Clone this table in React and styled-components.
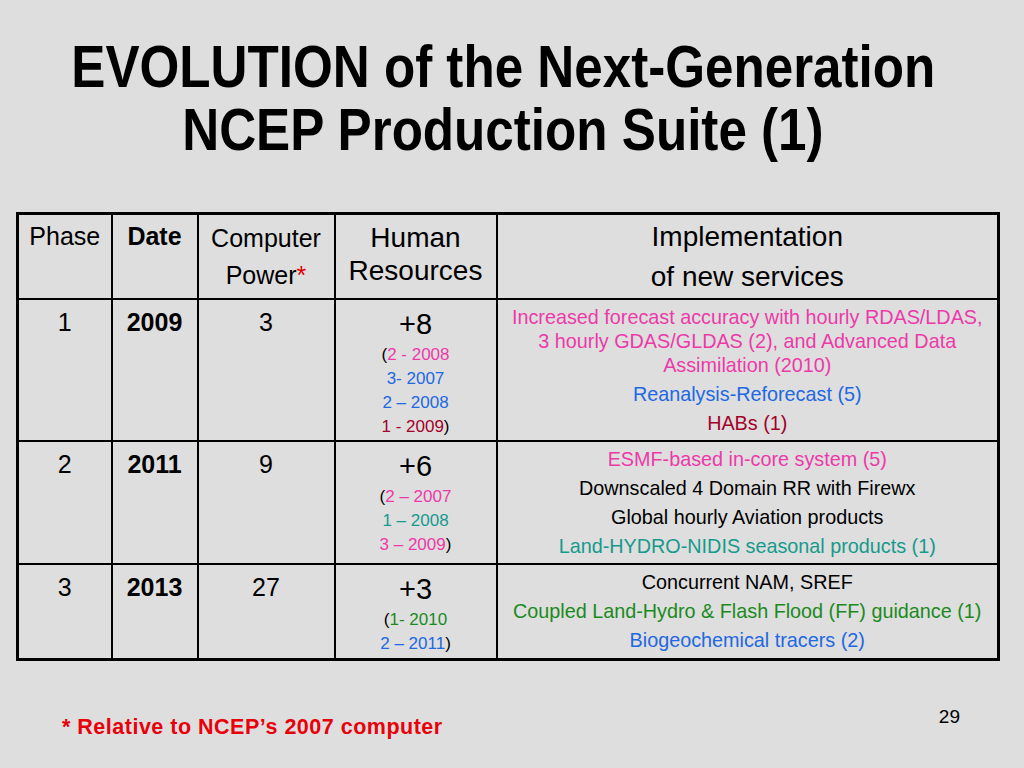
import styled, { createGlobalStyle } from "styled-components";

const GlobalStyle = createGlobalStyle`
    html, body {
        margin: 0;
        padding: 0;
        background: #dedede;
    }
`

const C = {
    pink: "#ec3aa9",
    blue: "#2168e2",
    red: "#a3002a",
    teal: "#169a8c",
    green: "#1b8a1d",
    black: "#000",
}

const rows = [
    {
        phase: "1",
        date: "2009",
        power: "3",
        hr: "+8",
        hrList: [
            { text: "2 - 2008", color: C.pink },
            { text: "3- 2007", color: C.blue },
            { text: "2 \u2013 2008", color: C.blue },
            { text: "1 - 2009", color: C.red },
        ],
        height: 142,
        services: [
            { text: "Increased forecast accuracy with hourly RDAS/LDAS, 3 hourly GDAS/GLDAS (2), and Advanced Data Assimilation (2010)", color: C.pink },
            { text: "Reanalysis-Reforecast (5)", color: C.blue },
            { text: "HABs (1)", color: C.red },
        ],
    },
    {
        phase: "2",
        date: "2011",
        power: "9",
        hr: "+6",
        hrList: [
            { text: "2 \u2013 2007", color: C.pink },
            { text: "1 \u2013 2008", color: C.teal },
            { text: "3 \u2013 2009", color: C.pink },
        ],
        height: 120,
        services: [
            { text: "ESMF-based in-core system (5)", color: C.pink },
            { text: "Downscaled 4 Domain RR with Firewx", color: C.black },
            { text: "Global hourly Aviation products", color: C.black },
            { text: "Land-HYDRO-NIDIS seasonal products (1)", color: C.teal },
        ],
    },
    {
        phase: "3",
        date: "2013",
        power: "27",
        hr: "+3",
        hrList: [
            { text: "1- 2010", color: C.green },
            { text: "2 \u2013 2011", color: C.blue },
        ],
        height: 96,
        services: [
            { text: "Concurrent NAM, SREF", color: C.black },
            { text: "Coupled Land-Hydro & Flash Flood (FF) guidance (1)", color: C.green },
            { text: "Biogeochemical tracers (2)", color: C.blue },
        ],
    },
]

export default function App() {
    return (
        <$Slide>
            <GlobalStyle />
            <$Title>
                <$TitleLine>EVOLUTION of the Next-Generation</$TitleLine>
                <$TitleLine>NCEP Production Suite (1)</$TitleLine>
            </$Title>

            <$Table>
                <colgroup>
                    <$Col w={94} />
                    <$Col w={86} />
                    <$Col w={137} />
                    <$Col w={162} />
                    <$Col />
                </colgroup>
                <thead>
                    <tr>
                        <$Head pad={7}>Phase</$Head>
                        <$Head pad={7} bold>Date</$Head>
                        <$Head pad={5} lh={37}>Computer<br />Power<$Star>*</$Star></$Head>
                        <$Head pad={6} big lh={33}>Human<br />Resources</$Head>
                        <$Head pad={2} big lh={40}>Implementation<br />of new services</$Head>
                    </tr>
                </thead>
                <tbody>
                    {rows.map(r => (
                        <$Row key={r.phase} h={r.height}>
                            <$Cell>{r.phase}</$Cell>
                            <$Cell bold>{r.date}</$Cell>
                            <$Cell>{r.power}</$Cell>
                            <$Cell>
                                <$Plus>{r.hr}</$Plus>
                                <$HrList>
                                    {r.hrList.map((h, i) => (
                                        <div key={i}>
                                            {i === 0 ? "(" : ""}
                                            <$Tint color={h.color}>{h.text}</$Tint>
                                            {i === r.hrList.length - 1 ? ")" : ""}
                                        </div>
                                    ))}
                                </$HrList>
                            </$Cell>
                            <$Services>
                                {r.services.map((s, i) => (
                                    <$Service key={i} color={s.color}>{s.text}</$Service>
                                ))}
                            </$Services>
                        </$Row>
                    ))}
                </tbody>
            </$Table>

            <$Footer>
                <$Note>* Relative to NCEP’s 2007 computer</$Note>
                <$PageNum>29</$PageNum>
            </$Footer>
        </$Slide>
    )
}

const $Slide = styled.div`
    width: 1024px;
    height: 768px;
    box-sizing: border-box;
    padding: 36px 16px 0 16px;
    background: #dedede;
    font-family: "Liberation Sans", Arial, sans-serif;
    color: #000;
    display: flex;
    flex-direction: column;
    overflow: hidden;
`

const $Title = styled.h1`
    margin: 0;
    padding-right: 18px;
    display: flex;
    flex-direction: column;
    align-items: center;
    font-family: "Liberation Sans", Arial, sans-serif;
    font-weight: 700;
    font-size: 59px;
    line-height: 63px;
    color: #000;
`

const $TitleLine = styled.span`
    display: block;
    white-space: nowrap;
    transform: scaleX(0.867);
    transform-origin: center;
`

const $Table = styled.table`
    margin-top: 50px;
    width: 984px;
    table-layout: fixed;
    border-collapse: collapse;
    border: 3px solid #000;
`

const $Col = styled.col`
    width: ${p => p.w ? p.w + "px" : "auto"};
`

const $Row = styled.tr`
    height: ${p => p.h}px;
`

const $Head = styled.th`
    height: 85px;
    box-sizing: border-box;
    border: 2px solid #000;
    vertical-align: top;
    text-align: center;
    padding: ${p => p.pad}px 0 0 0;
    font-weight: ${p => p.bold ? 700 : 400};
    font-size: ${p => p.big ? "28px" : "25px"};
    line-height: ${p => p.lh ? p.lh + "px" : "28px"};
    white-space: nowrap;
`

const $Star = styled.span`
    color: #e00000;
`

const $Cell = styled.td`
    border: 2px solid #000;
    vertical-align: top;
    text-align: center;
    padding: 8px 0 0 0;
    font-weight: ${p => p.bold ? 700 : 400};
    font-size: 25px;
    line-height: 28px;
`

const $Plus = styled.div`
    font-size: 29px;
    line-height: 32px;
`

const $HrList = styled.div`
    font-size: 17px;
    line-height: 24px;
    margin-top: 3px;
`

const $Tint = styled.span`
    color: ${p => p.color};
`

const $Services = styled.td`
    border: 2px solid #000;
    vertical-align: top;
    text-align: center;
    padding: 5px 10px 0 10px;
`

const $Service = styled.p`
    margin: 0 0 5px 0;
    font-size: 19.8px;
    line-height: 24px;
    color: ${p => p.color};
`

const $Footer = styled.div`
    margin-top: 46px;
    display: flex;
    justify-content: space-between;
    align-items: flex-start;
    padding: 0 48px 0 46px;
`

const $Note = styled.p`
    margin: 8px 0 0 0;
    font-weight: 700;
    font-size: 21.5px;
    letter-spacing: 0.5px;
    line-height: 24px;
    color: #e8000b;
`

const $PageNum = styled.span`
    font-size: 19px;
    line-height: 20px;
    color: #000;
`
